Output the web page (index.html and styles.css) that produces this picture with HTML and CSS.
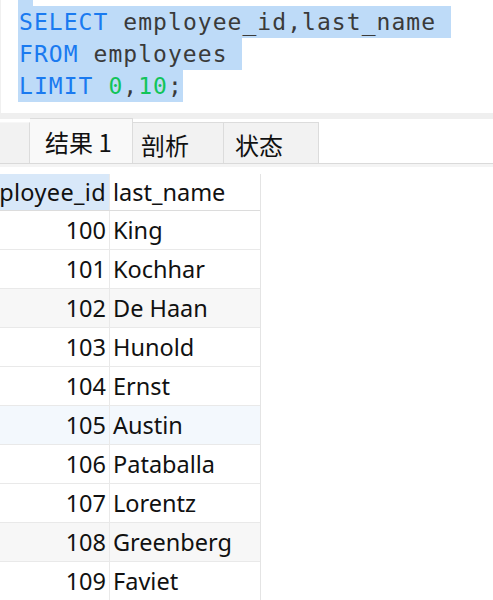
FILE: index.html
```html
<!DOCTYPE html>
<html lang="zh-CN">
<head>
<meta charset="utf-8">
<title>查询结果</title>
<link rel="stylesheet" href="styles.css">
</head>
<body>
<div class="app">
  <div class="editor">
    <div class="sel-tail"></div>
    <div class="line"><span class="kw">SELECT</span> employee_id,last_name </div>
    <div class="line"><span class="kw">FROM</span> employees </div>
    <div class="line"><span class="kw">LIMIT</span> <span class="num">0</span>,<span class="num">10</span>;</div>
  </div>
  <div class="band"></div>
  <div class="tabstrip">
    <div class="tab tab-stub"></div>
    <div class="tab tab-active">结果 1</div>
    <div class="tab tab-profile">剖析</div>
    <div class="tab tab-status">状态</div>
  </div>
  <div class="strip-shade"></div>
  <div class="grid-view">
    <div class="grid">
      <div class="row head">
        <div class="cell c-id sel">employee_id</div>
        <div class="cell c-name">last_name</div>
      </div>
      <div class="row"><div class="cell c-id">100</div><div class="cell c-name">King</div></div>
      <div class="row"><div class="cell c-id">101</div><div class="cell c-name">Kochhar</div></div>
      <div class="row alt"><div class="cell c-id">102</div><div class="cell c-name">De Haan</div></div>
      <div class="row"><div class="cell c-id">103</div><div class="cell c-name">Hunold</div></div>
      <div class="row"><div class="cell c-id">104</div><div class="cell c-name">Ernst</div></div>
      <div class="row hover"><div class="cell c-id">105</div><div class="cell c-name">Austin</div></div>
      <div class="row"><div class="cell c-id">106</div><div class="cell c-name">Pataballa</div></div>
      <div class="row"><div class="cell c-id">107</div><div class="cell c-name">Lorentz</div></div>
      <div class="row alt"><div class="cell c-id">108</div><div class="cell c-name">Greenberg</div></div>
      <div class="row"><div class="cell c-id">109</div><div class="cell c-name">Faviet</div></div>
    </div>
  </div>
</div>
</body>
</html>
```
FILE: styles.css
```css
* { box-sizing: border-box; }
html, body {
  margin: 0;
  padding: 0;
  background: #ffffff;
  height: 600px;
  overflow: hidden;
}
.app {
  width: 493px;
  height: 600px;
  overflow: hidden;
  display: flex;
  flex-direction: column;
}
.editor {
  height: 113px;
  flex-shrink: 0;
  padding-left: 18px;
  border-left: 1px solid #f0f0f0;
  font-family: "DejaVu Sans Mono", "Liberation Mono", monospace;
  font-size: 23px;
  letter-spacing: 1.05px;
  line-height: 32px;
  color: #3a3a3a;
}
.editor .sel-tail {
  width: 15px;
  height: 6px;
  margin-left: -1px;
  background: #bedbf8;
}
.editor .line {
  white-space: pre;
  height: 32px;
  width: fit-content;
  background: #bedbf8;
  margin-left: -1px;
  padding-left: 1px;
}
.kw { color: #1a7af0; }
.num { color: #12c45a; }

.band {
  height: 6px;
  flex-shrink: 0;
  background: #efefef;
}
.tabstrip {
  height: 45px;
  flex-shrink: 0;
  display: flex;
  align-items: flex-end;
  background: #ffffff;
  border-bottom: 1px solid #dadada;
  font-family: "Noto Sans CJK SC", "Noto Sans", sans-serif;
  font-size: 24px;
  color: #111111;
}
.tab {
  height: 41px;
  display: flex;
  align-items: center;
  background: #f2f2f2;
  border: 1px solid #dcdcdc;
  border-bottom: none;
  border-left: none;
  padding-top: 3px;
}
.tab-stub {
  width: 30px;
  border-top-color: #f7f7f7;
}
.tab-active {
  height: 45px;
  width: 103px;
  padding-left: 15px;
  padding-top: 0;
  background: #f9f9f9;
  border-left: none;
}
.tab-profile {
  width: 91px;
  padding-left: 8px;
}
.tab-status {
  width: 95px;
  padding-left: 11px;
}
.strip-shade {
  height: 3px;
  flex-shrink: 0;
  background: #f4f4f4;
}
.grid-view {
  margin-top: 7px;
  overflow: hidden;
}
.grid {
  margin-left: -39px;
  width: 300px;
  border-right: 1px solid #e4e4e4;
  font-family: "Noto Sans", "Open Sans", sans-serif;
  font-size: 23.5px;
  color: #111111;
}
.row {
  display: flex;
  height: 39px;
  border-bottom: 1px solid #e9e9e9;
}
.row.head {
  height: 37px;
  border-bottom: 1px solid #dcdcdc;
}
.row.alt { background: #f7f7f7; }
.row.hover { background: #f3f8fd; }
.cell {
  display: flex;
  align-items: center;
  white-space: nowrap;
  overflow: hidden;
}
.c-id {
  width: 149px;
  justify-content: flex-end;
  padding-right: 3px;
  border-right: 1px solid #e9e9e9;
}
.c-id.sel {
  background: #d8e8f9;
  letter-spacing: 0.35px;
}
.c-name {
  width: 150px;
  padding-left: 3px;
}
```
